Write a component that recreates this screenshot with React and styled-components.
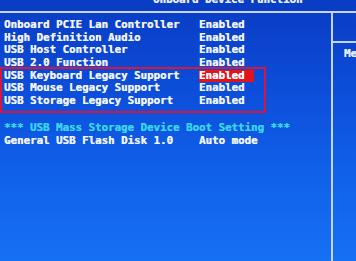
import React from "react";
import styled, { createGlobalStyle } from "styled-components";

const Global = createGlobalStyle`
  html, body { margin: 0; padding: 0; }
  body {
    width: 356px;
    height: 261px;
    overflow: hidden;
    background: #0d4fd8;
  }
`;

const Screen = styled.div`
  width: 356px;
  height: 261px;
  display: flex;
  flex-direction: column;
  overflow: hidden;
  background: linear-gradient(180deg, #0a3cc4 0%, #0c4bd6 30%, #1060ea 65%, #1670f4 100%);
  font-family: "DejaVu Sans Mono", "Liberation Mono", monospace;
  font-weight: bold;
  font-size: 10.8px;
  line-height: 12.7px;
  color: #eef2fa;
  text-shadow: 0.35px 0 0 currentColor;
`;

const Header = styled.div`
  height: 11px;
  flex: none;
  display: flex;
  align-items: flex-end;
  padding-left: 153px;
  border-bottom: 2px solid #c6d4ec;
  overflow: hidden;
`;

const Title = styled.div`
  white-space: nowrap;
  color: #e4ecf8;
  margin-bottom: 4px;
`;

const Body = styled.div`
  flex: 1;
  display: flex;
`;

const Main = styled.div`
  width: 327px;
  flex: none;
  padding: 6px 0 0 4px;
  border-right: 2px solid #c6d4ec;
  display: flex;
  flex-direction: column;
`;

const Row = styled.div`
  display: grid;
  grid-template-columns: 195px auto;
  white-space: nowrap;
  height: 12.7px;
  color: ${(p) => (p.$cyan ? "#38d4f2" : "#eef2fa")};
  margin-top: ${(p) => p.$gap || 0}px;
`;

const Value = styled.span`
  justify-self: start;
  display: inline-block;
  padding: 0 9px 0 0;
  background: ${(p) => (p.$selected ? "#e0141e" : "transparent")};
  color: ${(p) => (p.$selected ? "#ffffff" : "inherit")};
`;

const Group = styled.div`
  position: relative;
  &::after {
    content: "";
    position: absolute;
    left: -4px;
    top: -3px;
    width: 262px;
    bottom: -5px;
    border: 2px solid #d8163c;
    pointer-events: none;
  }
`;

const Side = styled.div`
  flex: 1;
  display: flex;
  flex-direction: column;
  overflow: hidden;
`;

const SideTop = styled.div`
  height: 28px;
  border-bottom: 2px solid #c6d4ec;
`;

const SideText = styled.div`
  padding: 5px 0 0 11px;
  white-space: nowrap;
  color: #e8eef8;
`;

const top = [
  ["Onboard PCIE Lan Controller", "Enabled"],
  ["High Definition Audio", "Enabled"],
  ["USB Host Controller", "Enabled"],
  ["USB 2.0 Function", "Enabled"],
];

const legacy = [
  ["USB Keyboard Legacy Support", "Enabled", true],
  ["USB Mouse Legacy Support", "Enabled"],
  ["USB Storage Legacy Support", "Enabled"],
];

export default function App() {
  return (
    <>
      <Global />
      <Screen>
        <Header>
          <Title>Onboard Device Function</Title>
        </Header>
        <Body>
          <Main>
            {top.map(([l, v]) => (
              <Row key={l}>
                <span>{l}</span>
                <Value>{v}</Value>
              </Row>
            ))}
            <Group>
              {legacy.map(([l, v, s]) => (
                <Row key={l}>
                  <span>{l}</span>
                  <Value $selected={s}>{v}</Value>
                </Row>
              ))}
            </Group>
            <Row $cyan $gap={14}>
              <span>*** USB Mass Storage Device Boot Setting ***</span>
            </Row>
            <Row>
              <span>General USB Flash Disk 1.0</span>
              <Value>Auto mode</Value>
            </Row>
          </Main>
          <Side>
            <SideTop />
            <SideText>Menu Level</SideText>
          </Side>
        </Body>
      </Screen>
    </>
  );
}
